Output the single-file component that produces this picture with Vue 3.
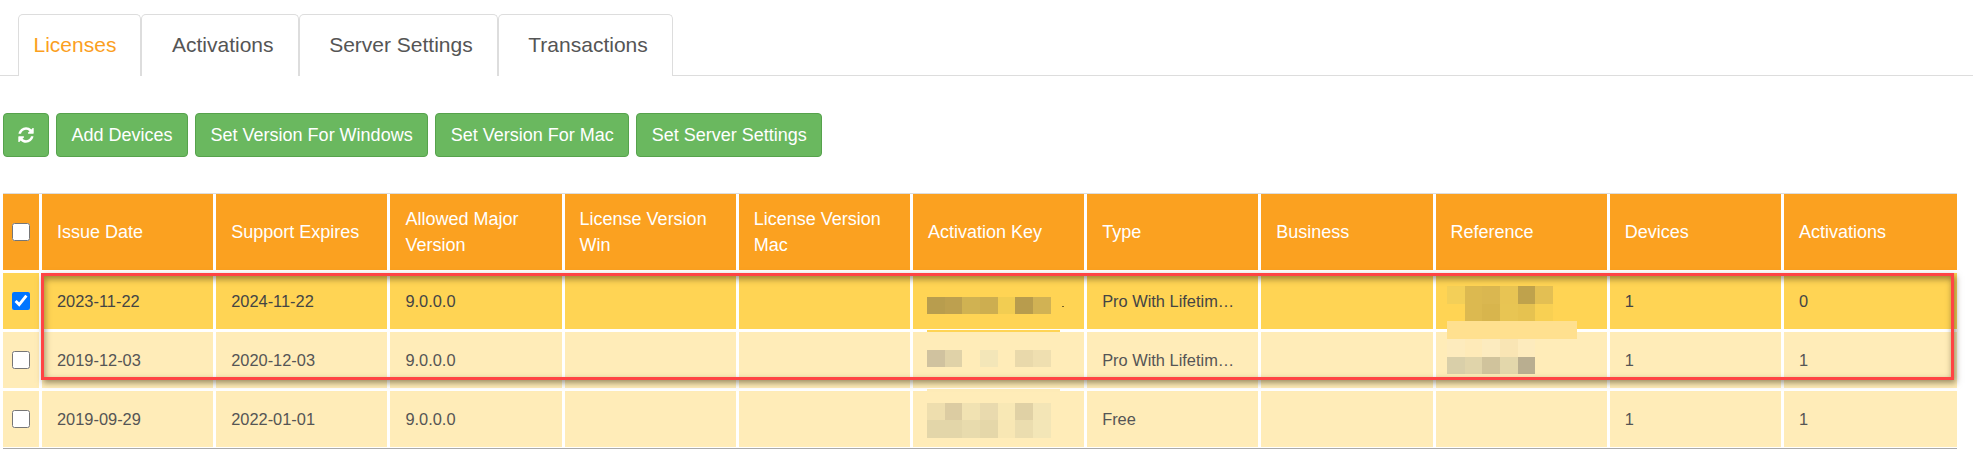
<script setup>
const tabs = ['Licenses', 'Activations', 'Server Settings', 'Transactions']
const actions = ['Add Devices', 'Set Version For Windows', 'Set Version For Mac', 'Set Server Settings']
const heads = ['Issue Date', 'Support Expires', 'Allowed Major Version', 'License Version Win', 'License Version Mac', 'Activation Key', 'Type', 'Business', 'Reference', 'Devices', 'Activations']
const rows = [
  { checked: true, cells: ['2023-11-22', '2024-11-22', '9.0.0.0', '', '', '', 'Pro With Lifetim…', '', '', '1', '0'] },
  { checked: false, cells: ['2019-12-03', '2020-12-03', '9.0.0.0', '', '', '', 'Pro With Lifetim…', '', '', '1', '1'] },
  { checked: false, cells: ['2019-09-29', '2022-01-01', '9.0.0.0', '', '', '', 'Free', '', '', '1', '1'] }
]

const keyX = [927, 945, 962, 980, 998, 1015, 1033, 1051]
const refX = [1447, 1465, 1482, 1500, 1518, 1535, 1553]
const band = (xs, y, h, colors) =>
  colors.map((c, i) => (c ? { x: xs[i], y, w: xs[i + 1] - xs[i], h, c } : null)).filter(Boolean)

// Pixelated redaction blocks laid over the table, in page coordinates.
const blocks = [
  { x: 927, y: 329, w: 133, h: 2, c: '#ffd455' },
  { x: 927, y: 331, w: 133, h: 1, c: '#ffecb8' },
  { x: 927, y: 388, w: 133, h: 3, c: '#ffecb8' },
  ...band(keyX, 296, 17, ['#b89d4e', '#bda04f', '#d0b252', '#cdae50', '#f2cd52', '#b89c4d', '#d1b254']),
  ...band(keyX, 349, 17, ['#d0c29f', '#e0d2a8', null, '#f3e6b8', null, '#e9d9ab', '#efdfb0']),
  ...band(keyX, 402, 17, ['#eedeae', '#dccca2', '#f1e2b2', '#e9daae', '#f8e8b5', '#e0d1a5', '#f3e5b6']),
  ...band(keyX, 419, 18, ['#e3d6a9', '#e3d6a9', '#e8dbad', '#e5d7a9', '#f8e7b4', '#ebddaf', '#f3e6b7']),
  { x: 1062, y: 305, w: 2, h: 1, c: '#7a6526' },
  { x: 1447, y: 320, w: 130, h: 18, c: '#ffe08f' },
  ...band(refX, 285, 18, ['#f3cf58', '#dcb950', '#dab750', '#e8c453', '#bfa24c', '#e3bf53']),
  ...band(refX, 303, 17, [null, '#dcb950', '#d8b54d', '#e8c553', '#e6c250', '#f8d053']),
  ...band(refX, 338, 18, ['#fdebbd', '#feeab8', '#fcebbf', '#f9e5b4', '#fdebbd']),
  ...band(refX, 356, 17, ['#d9cfa9', '#e0d4aa', '#d0c39c', '#e3d7ab', '#b9ae90'])
]
const blockStyle = (b) => ({
  left: b.x - 3 + 'px',
  top: b.y - 193 + 'px',
  width: b.w + 'px',
  height: b.h + 'px',
  background: b.c
})
</script>

<template>
  <div class="page">
    <ul class="tabs">
      <li v-for="(t, i) in tabs" :key="t" class="tab" :class="{ active: i === 0 }">{{ t }}</li>
    </ul>

    <div class="toolbar">
      <button class="btn icon-btn" type="button" aria-label="Refresh">
        <svg viewBox="0 0 1792 1792" width="18" height="18" fill="#fff">
          <path d="M1639 1056q0 5-1 7-64 268-268 434.5t-478 166.5q-146 0-282.5-55t-243.5-157l-129 129q-19 19-45 19t-45-19-19-45v-448q0-26 19-45t45-19h448q26 0 45 19t19 45-19 45l-137 137q71 66 161 102t187 36q134 0 250-65t186-179q11-17 53-117 8-23 30-23h192q13 0 22.5 9.5t9.5 22.5zm25-800v448q0 26-19 45t-45 19h-448q-26 0-45-19t-19-45 19-45l138-138q-148-137-349-137-134 0-250 65t-186 179q-11 17-53 117-8 23-30 23h-199q-13 0-22.5-9.5t-9.5-22.5v-7q65-268 270-434.5t480-166.5q146 0 284 55.5t245 156.5l130-129q19-19 45-19t45 19 19 45z" />
        </svg>
      </button>
      <button v-for="a in actions" :key="a" class="btn" type="button">{{ a }}</button>
    </div>

    <div class="table-wrap">
      <div class="grid">
        <div class="cell head check"><input type="checkbox" /></div>
        <div v-for="h in heads" :key="h" class="cell head">{{ h }}</div>
        <template v-for="(r, i) in rows" :key="i">
          <div class="cell check" :class="{ selected: r.checked }"><input type="checkbox" :checked="r.checked" /></div>
          <div v-for="(c, j) in r.cells" :key="j" class="cell body" :class="{ selected: r.checked }">{{ c }}</div>
        </template>
      </div>
      <span v-for="(b, i) in blocks" :key="i" class="block" :style="blockStyle(b)"></span>
      <div class="marker"></div>
    </div>
  </div>
</template>

<style scoped>
.page {
  width: 1973px;
  height: 469px;
  overflow: hidden;
  background: #fff;
  font-family: "Liberation Sans", Arial, sans-serif;
}
.tabs {
  list-style: none;
  margin: 0;
  padding: 14px 0 0 18px;
  display: flex;
  height: 76px;
  box-sizing: border-box;
  border-bottom: 1.5px solid #ddd;
}
.tab {
  box-sizing: border-box;
  height: 62px;
  padding: 0 24px 0 29.6px;
  border: 1.5px solid #ddd;
  border-bottom: 0;
  border-radius: 5px 5px 0 0;
  font-size: 21px;
  line-height: 59px;
  color: #555;
  background: #fff;
}
.tab.active {
  color: #fb9f1f;
  padding-left: 14.5px;
}
.toolbar {
  display: flex;
  gap: 7px;
  margin: 37px 0 0 3px;
}
.btn {
  box-sizing: border-box;
  height: 44px;
  padding: 0 14.5px;
  border: 1px solid #56a24c;
  border-radius: 4px;
  background: #6ab85f;
  color: #fff;
  font-family: inherit;
  font-size: 18px;
  display: flex;
  align-items: center;
}
.icon-btn {
  width: 46px;
  padding: 0;
  justify-content: center;
}
.table-wrap {
  position: relative;
  width: 1954px;
  margin: 36px 0 0 3px;
  border-top: 1px solid #ddd;
  border-bottom: 1.5px solid #aaa;
  box-sizing: border-box;
  height: 255.5px;
}
.grid {
  display: grid;
  grid-template-columns: 36px repeat(10, 171.2px) 1fr;
  grid-template-rows: 76px repeat(3, 56px);
  gap: 3px;
}
.cell {
  display: flex;
  align-items: center;
  padding: 0 15px;
  min-width: 0;
  background: #ffecb8;
  font-size: 16.4px;
  color: #555;
}
.cell.selected {
  background: #ffd454;
  color: #444;
}
.cell.head {
  background: #fba120;
  color: #fff;
  font-size: 18px;
  line-height: 26px;
}
.cell.check {
  padding: 0;
  justify-content: center;
}
.check input {
  width: 18px;
  height: 18px;
  margin: 0;
}
.block {
  position: absolute;
  display: block;
}
.marker {
  position: absolute;
  left: 38px;
  top: 79px;
  width: 1913px;
  height: 107px;
  box-sizing: border-box;
  border: 3px solid #ff4444;
  box-shadow: 2px 3px 6px rgba(60, 50, 20, 0.5), inset 1px 3px 6px rgba(60, 50, 20, 0.5);
  pointer-events: none;
}
</style>
